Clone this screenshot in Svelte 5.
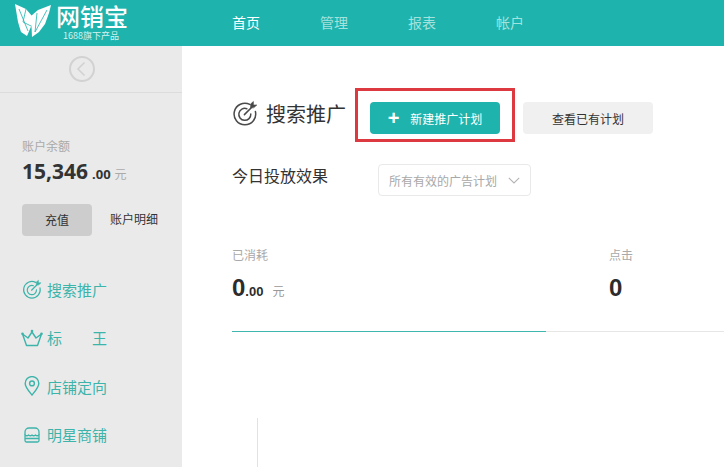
<script lang="ts">
  const nav = [
    { label: '首页', active: true },
    { label: '管理', active: false },
    { label: '报表', active: false },
    { label: '帐户', active: false },
  ];
</script>

{#snippet target()}
  <svg viewBox="0 0 26 26" width="26" height="26" fill="none" stroke="currentColor" stroke-width="1.5" stroke-linecap="round">
    <path d="M17.8 4.400A10.800 10.800 0 1 0 23.400 11.500"/>
    <path d="M14.800 8.700A6 6 0 1 0 18.800 14"/>
    <path d="M12.400 14.600 20.500 6.500"/>
    <path d="M18.600 7.500V4L21.400 1.500V5H24.800L22 7.500z" fill="currentColor" stroke-width="0.6"/>
  </svg>
{/snippet}

<div class="page">
  <header>
    <div class="logo">
      <svg viewBox="0 0 38 36" width="38" height="36">
        <path d="M1 2 12 7 18 14 19 20 13 34 7 30 4 20z" fill="#fff"/>
        <path d="M37 3 24 8 17 14 18 35 25 30 31 22 35 11z" fill="#fff"/>
        <path d="M5 7 14 29M12 7 9 20 17 24M23 11 21 30 33 8" fill="none" stroke="#1fb3ad" stroke-width="0.8"/>
      </svg>
      <div class="brand">
        <strong>网销宝</strong>
        <small>1688旗下产品</small>
      </div>
    </div>
    <nav>
      {#each nav as item}
        <span class:active={item.active}>{item.label}</span>
      {/each}
    </nav>
  </header>

  <div class="body">
    <aside>
      <div class="collapse">
        <svg viewBox="0 0 26 26" width="26" height="26" fill="none" stroke="#d2d2d2" stroke-width="2">
          <circle cx="13" cy="13" r="12"/>
          <path d="M15.500 6.500 9 13l6.500 6.500" stroke-width="1.600"/>
        </svg>
      </div>

      <div class="account">
        <div class="balance-label">账户余额</div>
        <div class="balance"><b>15,346</b><em>.00</em><i>元</i></div>
        <div class="actions">
          <span class="recharge">充值</span>
          <span class="detail">账户明细</span>
        </div>
      </div>

      <ul class="menu">
        <li>
          <span class="icon">{@render target()}</span>
          <span>搜索推广</span>
        </li>
        <li>
          <span class="icon">
            <svg viewBox="0 0 22 18" width="22" height="18" fill="none" stroke="currentColor" stroke-width="1.400" stroke-linejoin="round">
              <path d="M1.500 5 7 9 11 3 15 9 20.500 5 16.500 16.500H5.500z"/>
              <circle cx="11" cy="2" r="1.300" fill="currentColor" stroke="none"/>
              <circle cx="1.500" cy="4.800" r="1.300" fill="currentColor" stroke="none"/>
              <circle cx="20.500" cy="4.800" r="1.300" fill="currentColor" stroke="none"/>
            </svg>
          </span>
          <span class="wide">标<span>王</span></span>
        </li>
        <li>
          <span class="icon">
            <svg viewBox="0 0 16 20" width="16" height="20" fill="none" stroke="currentColor" stroke-width="1.400">
              <path d="M8 19C4 14 1.200 11 1.200 7.400a6.800 6.800 0 0 1 13.600 0C14.800 11 12 14 8 19z"/>
              <circle cx="8" cy="7.400" r="2.400"/>
            </svg>
          </span>
          <span>店铺定向</span>
        </li>
        <li>
          <span class="icon">
            <svg viewBox="0 0 16 16" width="16" height="16" fill="none" stroke="currentColor" stroke-width="1.300" stroke-linejoin="round">
              <path d="M1 8V5a4 4 0 0 1 4-4h6a4 4 0 0 1 4 4v3"/>
              <path d="M1 8q2 1.500 3.500 0 2 1.500 3.500 0 1.500 1.500 3.500 0 1.500 1.500 3.500 0v5.500a1.500 1.500 0 0 1-1.500 1.500h-11A1.500 1.500 0 0 1 1 13.500zM1 11.500h14"/>
            </svg>
          </span>
          <span>明星商铺</span>
        </li>
      </ul>
    </aside>

    <main>
      <div class="title-row">
        <h1>
          <span class="title-icon">{@render target()}</span>
          搜索推广
        </h1>
        <div class="highlight">
          <button class="primary"><span class="plus">+</span>新建推广计划</button>
        </div>
        <button class="secondary">查看已有计划</button>
      </div>

      <div class="filter-row">
        <h2>今日投放效果</h2>
        <div class="select">
          所有有效的广告计划
          <svg viewBox="0 0 12 7" width="12" height="7" fill="none" stroke="#b4b4b4" stroke-width="1.100">
            <path d="M.8.8 6 6l5.200-5.200"/>
          </svg>
        </div>
      </div>

      <div class="stats">
        <div class="stat first">
          <div class="stat-label">已消耗</div>
          <div class="stat-value"><b>0</b><em>.00</em><i>元</i></div>
        </div>
        <div class="stat">
          <div class="stat-label">点击</div>
          <div class="stat-value"><b>0</b></div>
        </div>
      </div>

      <div class="progress"><div class="bar"></div></div>

      <div class="chart-axis"></div>
    </main>
  </div>
</div>

<style>
  :global(body) {
    margin: 0;
    overflow: hidden;
  }

  .page {
    width: 724px;
    height: 467px;
    overflow: hidden;
    font-family: "Noto Sans CJK SC", "Liberation Sans", sans-serif;
    display: flex;
    flex-direction: column;
    color: #333;
  }

  header {
    height: 46px;
    flex-shrink: 0;
    background: #1fb3ad;
    display: flex;
    align-items: center;
  }

  .logo {
    width: 232px;
    padding-left: 14px;
    box-sizing: border-box;
    display: flex;
    align-items: center;
    gap: 4px;
    color: #fff;
  }

  .logo svg {
    margin-bottom: 6px;
  }

  .brand {
    display: flex;
    flex-direction: column;
    align-items: flex-start;
    padding-bottom: 3px;
  }

  .brand strong {
    font-size: 24px;
    font-weight: 500;
    line-height: 25px;
  }

  .brand small {
    font-size: 9px;
    line-height: 11px;
    margin: 2px 0 0 7px;
    color: #d5f3f1;
  }

  nav {
    display: flex;
    gap: 60px;
    padding-bottom: 3px;
    font-size: 14px;
    color: #a4e2de;
  }

  nav .active {
    color: #fff;
  }

  .body {
    flex: 1;
    display: flex;
    min-height: 0;
  }

  aside {
    width: 182px;
    flex-shrink: 0;
    background: #eaeaea;
  }

  .collapse {
    height: 46px;
    border-bottom: 1px solid #dcdcdc;
    display: flex;
    align-items: center;
    justify-content: center;
    padding-right: 18px;
  }

  .account {
    padding: 45px 0 0 22px;
  }

  .balance-label {
    font-size: 12px;
    line-height: 16px;
    color: #a9a9a9;
  }

  .balance {
    margin-top: 4px;
    line-height: 26px;
    font-family: "Noto Sans", sans-serif;
    white-space: nowrap;
  }

  .balance b {
    font-size: 21px;
    color: #333;
  }

  .balance em {
    font-style: normal;
    font-weight: 700;
    font-size: 13px;
    margin-left: 4px;
    color: #333;
  }

  .balance i {
    font-style: normal;
    font-size: 12px;
    margin-left: 4px;
    color: #aaa;
    font-family: "Noto Sans CJK SC", sans-serif;
  }

  .actions {
    margin-top: 17px;
    display: flex;
    align-items: center;
    font-size: 12px;
  }

  .recharge {
    width: 70px;
    height: 32px;
    box-sizing: border-box;
    padding-bottom: 2px;
    border-radius: 4px;
    background: #cdcdcd;
    display: flex;
    align-items: center;
    justify-content: center;
  }

  .detail {
    margin-left: 18px;
    margin-top: -4px;
  }

  .menu {
    list-style: none;
    margin: 29px 0 0;
    padding: 0 0 0 22px;
    color: #3cb4aa;
    font-size: 15px;
  }

  .menu li {
    height: 48.500px;
    display: flex;
    align-items: center;
    gap: 5px;
  }

  .menu .icon {
    width: 20px;
    display: flex;
    justify-content: center;
  }

  .menu .icon :global(svg) {
    flex-shrink: 0;
  }

  .menu li:first-child .icon :global(svg) {
    width: 20px;
    height: 20px;
  }

  .wide span {
    margin-left: 30px;
  }

  main {
    flex: 1;
    min-width: 0;
    padding-left: 50px;
  }

  .title-row {
    margin-top: 42px;
    height: 54px;
    display: flex;
    align-items: center;
  }

  h1 {
    margin: -4px 0 0;
    width: 123px;
    display: flex;
    align-items: center;
    gap: 8px;
    font-size: 20px;
    font-weight: 400;
    white-space: nowrap;
    color: #333;
  }

  .title-icon {
    display: flex;
    color: #4a4a4a;
  }

  .highlight {
    width: 160px;
    height: 54px;
    box-sizing: border-box;
    border: 3px solid #dc3a40;
    padding-bottom: 5px;
    display: flex;
    align-items: flex-end;
    justify-content: center;
  }

  button {
    border: 0;
    font: inherit;
    font-size: 12px;
    width: 130px;
    height: 32px;
    border-radius: 4px;
    padding: 0;
  }

  .primary {
    background: #1fb3ad;
    color: #fff;
    display: flex;
    align-items: center;
    justify-content: center;
  }

  .plus {
    font-size: 20px;
    font-weight: 700;
    line-height: 1;
    margin-right: 11px;
    font-family: "Liberation Sans", sans-serif;
  }

  .secondary {
    margin: 6px 0 0 8px;
    background: #f0f0f0;
    color: #333;
  }

  .filter-row {
    margin-top: 22px;
    display: flex;
    align-items: flex-start;
  }

  h2 {
    margin: 0;
    width: 146px;
    font-size: 16px;
    font-weight: 400;
    line-height: 22px;
    color: #333;
  }

  .select {
    width: 153px;
    height: 32px;
    box-sizing: border-box;
    border: 1px solid #e9e9e9;
    border-radius: 4px;
    padding: 0 10px;
    display: flex;
    align-items: center;
    justify-content: space-between;
    font-size: 12px;
    color: #a8a8a8;
  }

  .stats {
    margin-top: 50px;
    display: flex;
  }

  .stat.first {
    width: 377px;
  }

  .stat-label {
    font-size: 12px;
    line-height: 18px;
    color: #a9a9a9;
  }

  .stat-value {
    margin-top: 11px;
    line-height: 26px;
    font-family: "Liberation Sans", sans-serif;
    color: #2c2c2c;
  }

  .stat-value b {
    font-size: 24px;
  }

  .stat-value em {
    font-style: normal;
    font-weight: 700;
    font-size: 13px;
  }

  .stat-value i {
    font-style: normal;
    font-size: 12px;
    color: #999;
    margin-left: 9px;
    font-family: "Noto Sans CJK SC", sans-serif;
  }

  .progress {
    margin-top: 26px;
    height: 1px;
    background: #e6e6e6;
  }

  .bar {
    width: 314px;
    height: 1px;
    background: #3fb6ae;
  }

  .chart-axis {
    margin: 86px 0 0 25px;
    width: 1px;
    height: 50px;
    background: #e2e2e2;
  }
</style>
